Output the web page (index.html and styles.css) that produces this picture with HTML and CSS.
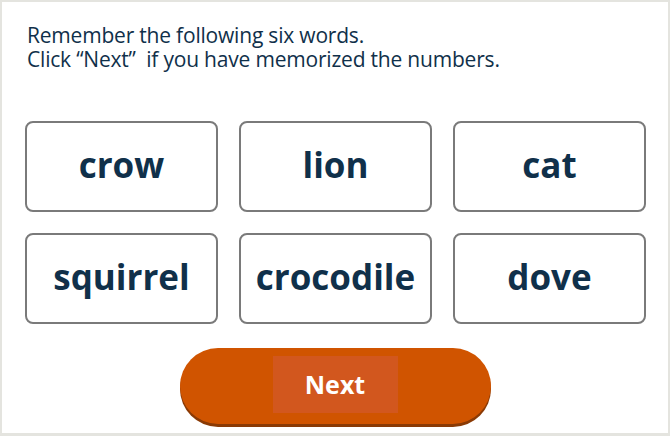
FILE: index.html
```html
<!DOCTYPE html>
<html>
<head>
  <meta charset="UTF-8">
  <title>Memory Words</title>
  <link rel="stylesheet" href="styles.css">
</head>
<body>
  <div class="frame">
    <p class="intro">Remember the following six words.<br>Click “Next”&nbsp; if you have memorized the numbers.</p>
    <!-- word cards -->
    <div class="words">
      <div class="word">crow</div>
      <div class="word">lion</div>
      <div class="word">cat</div>
      <div class="word">squirrel</div>
      <div class="word">crocodile</div>
      <div class="word">dove</div>
    </div>
    <div class="actions">
      <button class="next"><span class="label">Next</span></button>
    </div>
  </div>
</body>
</html>
```
FILE: styles.css
```css
html, body {
  margin: 0;
  padding: 0;
}
body {
  font-family: "Open Sans", Lato, sans-serif;
  background: #e4e4df;
}
.frame {
  width: 666px;
  height: 431px;
  margin: 2px 2px 0 2px;
  background: #fff;
  box-sizing: border-box;
  padding: 21px 22px 0 23px;
}
.intro {
  margin: 0 0 0 2px;
  font-size: 21px;
  line-height: 24px;
  color: #10304a;
  letter-spacing: -0.2px;
}
.words {
  margin-top: 50px;
  display: grid;
  grid-template-columns: repeat(3, 193px);
  grid-auto-rows: 91px;
  gap: 21px;
}
.word {
  border: 2.5px solid #7a7a7a;
  border-radius: 8px;
  display: flex;
  align-items: center;
  justify-content: center;
  font-size: 35px;
  font-weight: bold;
  color: #10304a;
  padding-bottom: 4px;
}
.actions {
  display: flex;
  justify-content: center;
  margin-top: 24px;
  padding-right: 1px;
}
.next {
  width: 311px;
  height: 76px;
  border: none;
  border-radius: 38px;
  background: #d05400;
  box-shadow: 0 3px 0 #8a3a05;
  display: flex;
  align-items: center;
  justify-content: center;
  cursor: pointer;
  font-family: inherit;
  padding: 0;
}
.label {
  width: 125px;
  height: 57px;
  display: flex;
  align-items: center;
  justify-content: center;
  background: #d2571e;
  color: #fff;
  font-size: 25px;
  font-weight: bold;
  margin-bottom: 4px;
}
```
